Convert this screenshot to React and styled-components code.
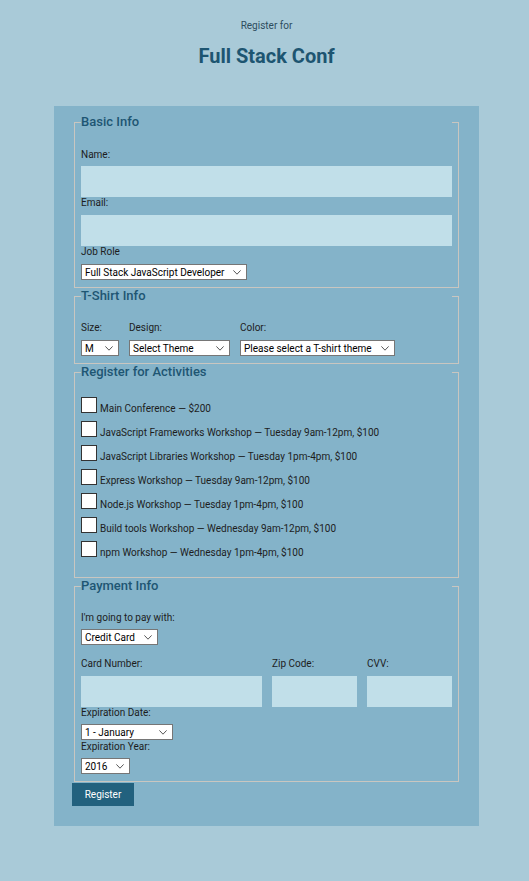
import React from 'react'
import styled, { createGlobalStyle } from 'styled-components'

const Global = createGlobalStyle`
    html, body {
        margin: 0;
        padding: 0;
        background: #a9cad8;
        font-family: Roboto, "Liberation Sans", sans-serif;
        color: #1d1d1d;
    }
`

const Page = styled.div`
    min-height: 881px;
    padding: 19px 0 0 4px;
    box-sizing: border-box;
`

const Header = styled.header`
    text-align: center;
`

const Kicker = styled.p`
    margin: 0;
    font-size: 10px;
    line-height: 14px;
    color: #2d4d5e;
`

const Title = styled.h1`
    margin: 11px 0 38px;
    font-size: 20px;
    line-height: 24px;
    font-weight: 700;
    color: #1d5571;
`

const Form = styled.form`
    width: 425px;
    margin: 0 auto;
    box-sizing: border-box;
    padding: 8px 18px 20px;
    background: #84b3c9;
`

const Fieldset = styled.fieldset`
    margin: 0 2px;
    padding: 0 6px ${p => p.$bottom || 7}px;
    border: 1px solid #c9c6c0;
    min-width: 0;
`

const Legend = styled.legend`
    width: 100%;
    padding: 0;
    font-size: 13px;
    line-height: 16px;
    font-weight: 500;
    color: #1e5673;
`

const Body = styled.div`
    padding-top: ${p => p.$top || 19}px;
`

const Label = styled.label`
    display: block;
    font-size: 10px;
    line-height: 12px;
    margin-bottom: ${p => p.$gap ?? 6}px;
`

const TextInput = styled.input`
    display: block;
    box-sizing: border-box;
    width: ${p => p.$w || '100%'};
    height: 31px;
    margin: 0;
    border: 0;
    background: #c1dfe9;
`

const SelectWrap = styled.span`
    position: relative;
    display: block;
    width: ${p => p.$w}px;
    height: 16px;
`

const NativeSelect = styled.select`
    appearance: none;
    display: block;
    box-sizing: border-box;
    width: 100%;
    height: 100%;
    margin: 0;
    padding: 0 0 0 3px;
    border: 1px solid #767676;
    border-radius: 0;
    background: #fff;
    font-family: Roboto, "Liberation Sans", sans-serif;
    font-size: 10px;
    color: #000;
    outline: none;
`

const Chevron = styled.svg`
    position: absolute;
    right: 6px;
    top: 6px;
    pointer-events: none;
`

const Select = ({ w, children }) => (
    <SelectWrap $w={w}>
        <NativeSelect>{children}</NativeSelect>
        <Chevron width="8" height="5" viewBox="0 0 8 5">
            <path d="M0.4 0.4 L4 4.2 L7.6 0.4" fill="none" stroke="#444" strokeWidth="0.9" />
        </Chevron>
    </SelectWrap>
)

const Row = styled.div`
    display: flex;
    gap: ${p => p.$gap || 10}px;
    justify-content: ${p => p.$spread ? 'space-between' : 'flex-start'};
    margin-top: ${p => p.$top || 0}px;
`

const Col = styled.div`
    display: flex;
    flex-direction: column;
`

const Activity = styled.label`
    display: flex;
    align-items: flex-end;
    height: 16px;
    font-size: 10px;
    margin-bottom: 8px;
`

const ActivityText = styled.span`
    line-height: 10px;
    margin-bottom: -1px;
`

const Check = styled.input`
    appearance: none;
    width: 16px;
    height: 16px;
    margin: 0 3px 0 0;
    box-sizing: border-box;
    border: 1px solid #333;
    background: #fff;
    flex: none;
`

const Button = styled.button`
    display: block;
    width: 62px;
    height: 23px;
    margin: 1px 0 0;
    padding: 0;
    border: 0;
    background: #22617e;
    color: #fff;
    font-family: Roboto, "Liberation Sans", sans-serif;
    font-size: 10px;
`

const activities = [
    'Main Conference — $200',
    'JavaScript Frameworks Workshop — Tuesday 9am-12pm, $100',
    'JavaScript Libraries Workshop — Tuesday 1pm-4pm, $100',
    'Express Workshop — Tuesday 9am-12pm, $100',
    'Node.js Workshop — Tuesday 1pm-4pm, $100',
    'Build tools Workshop — Wednesday 9am-12pm, $100',
    'npm Workshop — Wednesday 1pm-4pm, $100',
]

const App = () => {
    return (
        <>
            <Global />
            <Page>
                <Header>
                    <Kicker>Register for</Kicker>
                    <Title>Full Stack Conf</Title>
                </Header>
                <Form onSubmit={e => e.preventDefault()}>
                    <Fieldset>
                        <Legend>Basic Info</Legend>
                        <Body>
                            <Label $gap={5}>Name:</Label>
                            <TextInput type="text" />
                            <Label>Email:</Label>
                            <TextInput type="email" />
                            <Label>Job Role</Label>
                            <Select w={166}>
                                <option>Full Stack JavaScript Developer</option>
                            </Select>
                        </Body>
                    </Fieldset>

                    <Fieldset $bottom={7}>
                        <Legend>T-Shirt Info</Legend>
                        <Body $top={18}>
                            <Row $gap={10}>
                                <Col>
                                    <Label>Size:</Label>
                                    <Select w={38}><option>M</option></Select>
                                </Col>
                                <Col>
                                    <Label>Design:</Label>
                                    <Select w={101}><option>Select Theme</option></Select>
                                </Col>
                                <Col>
                                    <Label>Color:</Label>
                                    <Select w={155}><option>Please select a T-shirt theme</option></Select>
                                </Col>
                            </Row>
                        </Body>
                    </Fieldset>

                    <Fieldset $bottom={12}>
                        <Legend>Register for Activities</Legend>
                        <Body $top={17}>
                            {activities.map(a => (
                                <Activity key={a}>
                                    <Check type="checkbox" />
                                    <ActivityText>{a}</ActivityText>
                                </Activity>
                            ))}
                        </Body>
                    </Fieldset>

                    <Fieldset $bottom={7}>
                        <Legend>Payment Info</Legend>
                        <Body $top={18}>
                            <Label $gap={5}>I'm going to pay with:</Label>
                            <Select w={77}><option>Credit Card</option></Select>
                            <Row $spread $gap={0} $top={13}>
                                <Col>
                                    <Label>Card Number:</Label>
                                    <TextInput $w="181px" />
                                </Col>
                                <Col>
                                    <Label>Zip Code:</Label>
                                    <TextInput $w="85px" />
                                </Col>
                                <Col>
                                    <Label>CVV:</Label>
                                    <TextInput $w="85px" />
                                </Col>
                            </Row>
                            <Label $gap={5}>Expiration Date:</Label>
                            <Select w={92}><option>1 - January</option></Select>
                            <Label $gap={5} style={{ marginTop: 1 }}>Expiration Year:</Label>
                            <Select w={49}><option>2016</option></Select>
                        </Body>
                    </Fieldset>

                    <Button type="submit">Register</Button>
                </Form>
            </Page>
        </>
    )
}

export default App
